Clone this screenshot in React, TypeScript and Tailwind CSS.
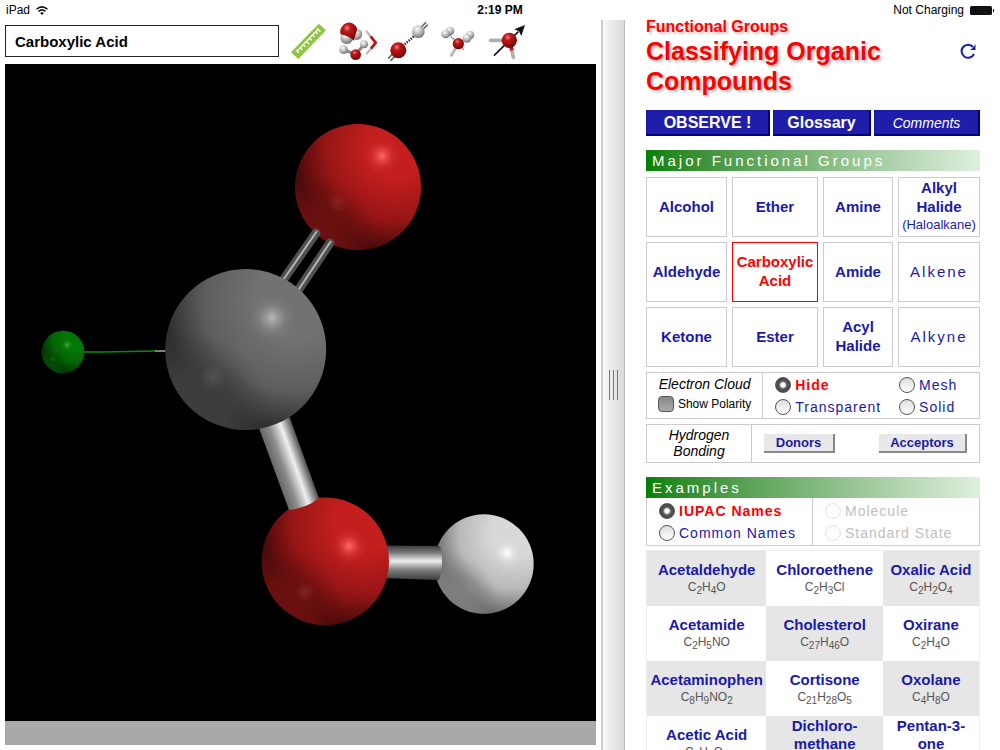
import React, { useState } from 'react';
import { clsx } from 'clsx';

const groups = [
  ['Alcohol'], ['Ether'], ['Amine'], ['Alkyl', 'Halide', '(Haloalkane)'],
  ['Aldehyde'], ['Carboxylic', 'Acid'], ['Amide'], ['Alkene'],
  ['Ketone'], ['Ester'], ['Acyl', 'Halide'], ['Alkyne'],
];

const examples = [
  [['Acetaldehyde', 'C2H4O'], ['Chloroethene', 'C2H3Cl'], ['Oxalic Acid', 'C2H2O4']],
  [['Acetamide', 'C2H5NO'], ['Cholesterol', 'C27H46O'], ['Oxirane', 'C2H4O']],
  [['Acetaminophen', 'C8H9NO2'], ['Cortisone', 'C21H28O5'], ['Oxolane', 'C4H8O']],
  [['Acetic Acid', 'C2H4O2'], ['Dichloro- methane', 'CH2Cl2'], ['Pentan-3- one', 'C5H10O']],
];

const Formula: React.FC<{ value: string }> = ({ value }) => (
  <>
    {value.split(/(\d+)/).map((part, i) =>
      /^\d+$/.test(part) ? <sub key={i} className="text-[10px]">{part}</sub> : part
    )}
  </>
);

interface RadioProps {
  name: string;
  label: string;
  value: string;
  disabled?: boolean;
  onChange: (v: string) => void;
}

const Radio: React.FC<RadioProps> = ({ name, label, value, disabled, onChange }) => {
  const checked = value === label;
  return (
    <label
      className={clsx(
        'flex items-center gap-1 text-[14px] leading-[22px] tracking-[1px] whitespace-nowrap',
        disabled ? 'text-[#c0c0c0]' : checked ? 'text-[#f00] font-bold' : 'text-[#1a1aaa]'
      )}
    >
      <input
        type="radio"
        name={name}
        checked={checked}
        disabled={disabled}
        onChange={() => onChange(label)}
        className="appearance-none size-4 shrink-0 rounded-full border border-[#555] bg-linear-to-b from-[#ddd] to-white checked:bg-[radial-gradient(circle,#fff_2px,#aaa_3px,#555_4px,#444_8px)] disabled:border-[#e4e4e4] disabled:from-[#fafafa]"
      />
      {label}
    </label>
  );
};

const SectionBar: React.FC<{ title: string }> = ({ title }) => (
  <h2 className="h-[21px] pl-1.5 text-[15px] leading-[21px] tracking-[3px] text-white bg-linear-to-r from-[#008000] to-[#dff0df] whitespace-nowrap">
    {title}
  </h2>
);

/* ---- ball and stick drawing ---- */

const palettes = {
  red: { light: '#c41e1e', mid: '#981616', dark: '#4a0a0a', fill: '#6b1010', spot: '#ff6666', dim: '#8e2a2a' },
  gray: { light: '#727272', mid: '#5e5e5e', dark: '#2e2e2e', fill: '#3e3e3e', spot: '#b8b8b8', dim: '#5a5a5a' },
  white: { light: '#d8d8d8', mid: '#b8b8b8', dark: '#6c6c6c', fill: '#7e7e7e', spot: '#ffffff', dim: '#8c8c8c' },
  green: { light: '#047804', mid: '#046404', dark: '#023402', fill: '#034a03', spot: '#44a844', dim: '#206820' },
};

const SphereDefs = () => (
  <defs>
    {Object.entries(palettes).map(([id, p]) => (
      <React.Fragment key={id}>
        <radialGradient id={`${id}-base`} cx="0.8" cy="0.2" r="0.92">
          <stop offset="0" stopColor={p.light} />
          <stop offset="0.25" stopColor={p.light} />
          <stop offset="0.6" stopColor={p.mid} />
          <stop offset="0.87" stopColor={p.dark} />
          <stop offset="1" stopColor={p.dark} />
        </radialGradient>
        <radialGradient id={`${id}-fill`} cx="0.14" cy="0.9" r="0.5">
          <stop offset="0" stopColor={p.fill} />
          <stop offset="0.45" stopColor={p.fill} stopOpacity="0.9" />
          <stop offset="0.75" stopColor={p.fill} stopOpacity="0.35" />
          <stop offset="1" stopColor={p.fill} stopOpacity="0" />
        </radialGradient>
        <radialGradient id={`${id}-spot`}>
          <stop offset="0" stopColor={p.spot} />
          <stop offset="0.3" stopColor={p.spot} stopOpacity="0.5" />
          <stop offset="0.6" stopColor={p.spot} stopOpacity="0.15" />
          <stop offset="1" stopColor={p.spot} stopOpacity="0" />
        </radialGradient>
        <radialGradient id={`${id}-dim`}>
          <stop offset="0" stopColor={p.dim} stopOpacity="0.7" />
          <stop offset="1" stopColor={p.dim} stopOpacity="0" />
        </radialGradient>
      </React.Fragment>
    ))}
    <linearGradient id="stick-co" gradientUnits="userSpaceOnUse" x1="274" y1="470" x2="305" y2="459">
      <stop offset="0" stopColor="#666" />
      <stop offset="0.3" stopColor="#8c8c8c" />
      <stop offset="0.65" stopColor="#f0f0f0" />
      <stop offset="1" stopColor="#4c4c4c" />
    </linearGradient>
    <linearGradient id="stick-oh" x1="0" y1="0" x2="0" y2="1">
      <stop offset="0" stopColor="#3c3c3c" />
      <stop offset="0.2" stopColor="#777" />
      <stop offset="0.45" stopColor="#eee" />
      <stop offset="0.7" stopColor="#808080" />
      <stop offset="1" stopColor="#3c3c3c" />
    </linearGradient>
  </defs>
);

interface BallProps {
  color: keyof typeof palettes;
  x: number;
  y: number;
  r: number;
}

interface SphereProps extends BallProps {
  spot: [number, number];
  dim: [number, number];
}

const Sphere: React.FC<SphereProps> = ({ color, x, y, r, spot, dim }) => (
  <g>
    <circle cx={x} cy={y} r={r} fill={`url(#${color}-base)`} />
    <circle cx={x} cy={y} r={r} fill={`url(#${color}-fill)`} />
    <circle cx={spot[0]} cy={spot[1]} r={r * 0.28} fill={`url(#${color}-spot)`} />
    <circle cx={dim[0]} cy={dim[1]} r={r * 0.16} fill={`url(#${color}-dim)`} />
  </g>
);

const Molecule = () => (
  <svg viewBox="5 64 591 657" className="block size-full" role="img" aria-label="Carboxylic Acid model">
    <SphereDefs />
    <path d="M84 352H102L130 351.500L155 351" stroke="#0a8a0a" strokeWidth="1.500" fill="none" />
    <path d="M155 351H168" stroke="#aaa" strokeWidth="1.500" />
    <Sphere color="green" x={63} y={352} r={21.3} spot={[67, 345]} dim={[53, 359]} />
    <Sphere color="red" x={358} y={187} r={63} spot={[382, 156]} dim={[338, 202]} />
    <path d="M279 286L316 233M295 295L330 243" stroke="#505050" strokeWidth="9" strokeLinecap="round" />
    <path d="M279 286L317 231M295 295L331 241" stroke="#b4b4b4" strokeWidth="2" />
    <Sphere color="white" x={484} y={564} r={49.7} spot={[507, 553]} dim={[471, 588]} />
    <path d="M380 545.500L439 546Q442 546 442 563Q441 580 438 580L380 578Z" fill="url(#stick-oh)" />
    <Sphere color="red" x={325.3} y={561.3} r={63.7} spot={[349, 546]} dim={[305, 592]} />
    <path d="M256 420L289 510Q307 508 319 498L287 410Z" fill="url(#stick-co)" />
    <Sphere color="gray" x={245.7} y={349.5} r={80.5} spot={[272, 318]} dim={[213, 377]} />
  </svg>
);

/* ---- toolbar icons ---- */

const Ball: React.FC<BallProps> = ({ color, x, y, r }) => (
  <circle cx={x} cy={y} r={r} fill={`url(#ball-${color})`} />
);

const BallDefs = () => (
  <svg width="0" height="0" className="absolute" aria-hidden="true">
    <defs>
      <radialGradient id="ball-red" cx="0.4" cy="0.3" r="0.7">
        <stop offset="0" stopColor="#ec8080" />
        <stop offset="0.3" stopColor="#c01818" />
        <stop offset="1" stopColor="#700808" />
      </radialGradient>
      <radialGradient id="ball-white" cx="0.4" cy="0.3" r="0.7">
        <stop offset="0" stopColor="#fff" />
        <stop offset="0.4" stopColor="#ccc" />
        <stop offset="1" stopColor="#777" />
      </radialGradient>
    </defs>
  </svg>
);

const tools = [
  {
    label: 'Measure',
    box: '24 18 120 120',
    art: (
      <>
        <path d="M33 112L116 26L138 46L55 132Z" fill="#8dc63f" />
        <path
          d="M48 105L57 114M51 109L114 43M60 97L67 104M69 88L76 95M78 78L88 88M88 69L95 76M97 59L104 66M106 50L113 57M111 40L121 50"
          stroke="#fff"
          strokeWidth="4"
          fill="none"
        />
      </>
    ),
  },
  {
    label: 'Model style',
    box: '174 18 120 120',
    art: (
      <>
        <Ball color="white" x={230} y={58} r={17} />
        <Ball color="white" x={200} y={68} r={19} />
        <path d="M182 58A26 27 0 1 1 232 42L221 77Q206 62 182 58Z" fill="url(#ball-red)" />
        <path d="M192 105L227 118L252 89" stroke="#888" strokeWidth="9" fill="none" />
        <Ball color="white" x={191} y={104} r={13} />
        <Ball color="white" x={252} y={88} r={12} />
        <Ball color="red" x={227} y={119} r={16} />
        <path d="M258 47L287 83L259 118" stroke="#bbb" strokeWidth="7" fill="none" />
        <path d="M272 64L287 83L273 101" stroke="#c01414" strokeWidth="8" fill="none" />
      </>
    ),
  },
  {
    label: 'Hydrogen bond',
    box: '324 18 120 120',
    art: (
      <>
        <path d="M324 131L340 114M331 138L347 121M424 36L438 22M430 42L443 29" stroke="#666" strokeWidth="5" />
        <path d="M368 93L405 61" stroke="#222" strokeWidth="7" strokeDasharray="4 4" />
        <Ball color="white" x={415} y={50} r={19} />
        <Ball color="red" x={355} y={106} r={24} />
      </>
    ),
  },
  {
    label: 'Geometry',
    box: '474 18 120 120',
    art: (
      <>
        <path d="M536 85L514 121" stroke="#bbb" strokeWidth="9" strokeLinecap="round" />
        <path d="M508 60L528 80M560 68L540 82M541 88L550 104" stroke="#555" strokeWidth="4" strokeDasharray="4 3" />
        <Ball color="white" x={510} y={48} r={13} />
        <Ball color="white" x={497} y={57} r={13} />
        <Ball color="white" x={570} y={60} r={13} />
        <Ball color="white" x={561} y={70} r={13} />
        <Ball color="red" x={535} y={86} r={17} />
      </>
    ),
  },
  {
    label: 'Dipole',
    box: '624 18 120 120',
    art: (
      <>
        <path d="M632 76H680" stroke="#b0b0b0" strokeWidth="11" strokeLinecap="round" />
        <path d="M692 90L700 127" stroke="#b0b0b0" strokeWidth="11" strokeLinecap="round" />
        <path d="M692 90L696 106" stroke="#c01414" strokeWidth="11" />
        <path d="M642 122L715 50" stroke="#111" strokeWidth="5" />
        <path d="M735 30L724 63L717 49L703 43Z" fill="#111" />
        <Ball color="red" x={688} y={76} r={23} />
      </>
    ),
  },
];

const GroupName: React.FC<{ lines: string[] }> = ({ lines }) => (
  <>
    {lines.map(line => (
      <span key={line} className={clsx('block', line.startsWith('(') && 'text-[13px] leading-[18px] font-normal')}>
        {line}
      </span>
    ))}
  </>
);

const App = () => {
  const [group, setGroup] = useState('Carboxylic');
  const [cloud, setCloud] = useState('Hide');
  const [naming, setNaming] = useState('IUPAC Names');
  const [state, setState] = useState('');
  const [polarity, setPolarity] = useState(false);

  return (
    <div className="h-screen flex flex-col overflow-hidden bg-white text-black font-['Liberation_Sans',Arial,sans-serif]">
      {/* Status bar */}
      <header className="h-5 shrink-0 grid grid-cols-3 items-center px-1.5 text-[12px]">
        <div className="flex items-center gap-1.5">
          iPad
          <svg width="12" height="9" viewBox="0 0 24 18" fill="none" stroke="#111" strokeWidth="3">
            <path d="M1 6.500Q12 -3 23 6.500M5 11Q12 4.500 19 11" />
            <path d="M8 14L12 18L16 14Q12 11 8 14Z" fill="#111" stroke="none" />
          </svg>
        </div>
        <div className="text-center font-bold">2:19 PM</div>
        <div className="flex items-center justify-end gap-1.5">
          Not Charging
          <svg width="24" height="9" viewBox="0 0 24 9" fill="#111">
            <rect width="22" height="9" rx="1.500" />
            <path d="M23 3H24V6H23Z" />
          </svg>
        </div>
      </header>

      <div className="flex flex-1 min-h-0">
        {/* Model viewer */}
        <main className="flex-1 min-w-0 flex flex-col px-[5px] pb-[5px]">
          <div className="h-11 shrink-0 flex items-center gap-[9px] pb-0.5">
            <input
              type="text"
              aria-label="Model name"
              defaultValue="Carboxylic Acid"
              className="w-[274px] h-8 px-[9px] border border-[#222] text-[15px] font-bold outline-none"
            />
            <div className="flex gap-2.5">
              <BallDefs />
              {tools.map(tool => (
                <button key={tool.label} type="button" aria-label={tool.label}>
                  <svg width="40" height="40" viewBox={tool.box}>{tool.art}</svg>
                </button>
              ))}
            </div>
          </div>
          <div className="flex-1 min-h-0 bg-black">
            <Molecule />
          </div>
          <div className="h-6 shrink-0 bg-[#a9a9a9]" />
        </main>

        {/* Splitter */}
        <div className="w-6 shrink-0 flex items-center justify-center gap-[3px] border-l-2 border-r border-l-[#ccc] border-r-[#bbb] bg-linear-to-r from-[#f8f8f8] to-[#dadada]">
          <span className="w-px h-[30px] bg-[#777]" />
          <span className="w-px h-[30px] bg-[#777]" />
          <span className="w-px h-[30px] bg-[#777]" />
        </div>

        {/* Side panel */}
        <aside className="w-[37.5%] shrink-0 overflow-hidden pl-[21px] pr-5">
          <div className="flex justify-between items-center text-[#f00] font-bold [text-shadow:2px_2px_3px_#bbb]">
            <div>
              <p className="text-[16px] leading-[14px]">Functional Groups</p>
              <h1 className="text-[25px] leading-[30px] mt-[2px]">Classifying Organic Compounds</h1>
            </div>
            <button type="button" aria-label="Reload" className="mr-1 -mt-3.5 shrink-0">
              <svg width="16" height="16" viewBox="0 0 16 16" fill="none" stroke="#1a1aaa" strokeWidth="2">
                <path d="M13 4A6.500 6.500 0 1 0 14 11" />
                <path d="M15.500 1V7H9.500Q13 6 15.500 1Z" fill="#1a1aaa" stroke="none" />
              </svg>
            </button>
          </div>

          <nav className="mt-3.5 grid grid-cols-[124fr_98fr_106fr] gap-[3px] text-white">
            <button type="button" className="h-[26px] bg-[#1e1eaa] border border-[#1616a0] border-b-2 border-b-[#00007a] border-r-2 border-r-[#00007a] text-[16px] font-bold leading-none">OBSERVE !</button>
            <button type="button" className="h-[26px] bg-[#1e1eaa] border border-[#1616a0] border-b-2 border-b-[#00007a] border-r-2 border-r-[#00007a] text-[16px] font-bold leading-none">Glossary</button>
            <button type="button" className="h-[26px] bg-[#1e1eaa] border border-[#1616a0] border-b-2 border-b-[#00007a] border-r-2 border-r-[#00007a] text-[14px] italic leading-none">Comments</button>
          </nav>

          <section className="mt-3.5">
            <SectionBar title="Major Functional Groups" />
            <div className="mt-1.5 grid grid-cols-[81fr_86fr_70fr_82fr] auto-rows-[60px] gap-[5px]">
              {groups.map(lines => (
                <button
                  key={lines.join(' ')}
                  type="button"
                  onClick={() => setGroup(lines[0])}
                  className={clsx(
                    'min-w-0 pb-0.5 border leading-[19px] whitespace-nowrap',
                    lines[0] === group ? 'border-[#f00] text-[#f00]' : 'border-[#ccc] text-[#1a1aaa]',
                    /^Alk(e|y)ne$/.test(lines[0]) ? 'text-[15px] tracking-[2px]' : 'text-[15px] font-bold'
                  )}
                >
                  <GroupName lines={lines} />
                </button>
              ))}
            </div>
          </section>

          <section className="mt-[5px] flex h-[47px] border border-[#ccc]">
            <div className="w-[35%] pb-1 border-r border-[#ccc] flex flex-col items-center justify-center">
              <p className="text-[14px] leading-5 italic whitespace-nowrap">Electron Cloud</p>
              <label className="flex items-center gap-1 text-[12px] leading-5 whitespace-nowrap">
                <input
                  type="checkbox"
                  checked={polarity}
                  onChange={e => setPolarity(e.target.checked)}
                  className="appearance-none size-4 rounded-[4px] border border-[#555] bg-linear-to-b from-[#888] to-[#aaa] checked:from-[#444]"
                />
                Show Polarity
              </label>
            </div>
            <div className="flex-1 grid grid-cols-[124fr_80fr] content-center pl-3">
              {['Hide', 'Mesh', 'Transparent', 'Solid'].map(o => (
                <Radio key={o} name="cloud" label={o} value={cloud} onChange={setCloud} />
              ))}
            </div>
          </section>

          <section className="mt-[5px] flex h-[39px] border border-[#ccc]">
            <p className="w-[105px] pb-0.5 border-r border-[#ccc] text-[14px] leading-4 italic text-center flex items-center justify-center">
              Hydrogen<br />Bonding
            </p>
            <div className="flex-1 flex items-center justify-between px-3 text-[13px] font-bold text-[#1a1aaa]">
              <button type="button" className="w-[71px] h-[19px] leading-4 bg-[#e8e8e8] border-r-2 border-b-2 border-[#888]">Donors</button>
              <button type="button" className="w-[88px] h-[19px] leading-4 bg-[#e8e8e8] border-r-2 border-b-2 border-[#888]">Acceptors</button>
            </div>
          </section>

          <section className="mt-3.5">
            <SectionBar title="Examples" />
            <div className="flex h-12 border border-t-0 border-[#ccc]">
              <div className="w-1/2 pl-3 pt-0.5 border-r border-[#ccc]">
                {['IUPAC Names', 'Common Names'].map(o => (
                  <Radio key={o} name="naming" label={o} value={naming} onChange={setNaming} />
                ))}
              </div>
              <div className="w-1/2 pl-3 pt-0.5">
                {['Molecule', 'Standard State'].map(o => (
                  <Radio key={o} name="state" label={o} value={state} disabled onChange={setState} />
                ))}
              </div>
            </div>

            <table className="mt-1 w-full table-fixed border-collapse border border-[#eee] text-center">
              <colgroup>
                <col className="w-[36%]" />
                <col className="w-[35%]" />
                <col className="w-[29%]" />
              </colgroup>
              <tbody>
                {examples.map((row, r) => (
                  <tr key={r} className="h-[55px]">
                    {row.map(([name, formula], c) => (
                      <td key={name} className={clsx('p-0 align-middle', (r + c) % 2 === 0 ? 'bg-[#e6e6e6]' : 'bg-white')}>
                        <a href="#" className="block">
                          <span className="block text-[15px] leading-[18px] font-bold text-[#1a1aaa]">{name}</span>
                          <span className="block text-[12px] leading-4 text-[#555]"><Formula value={formula} /></span>
                        </a>
                      </td>
                    ))}
                  </tr>
                ))}
              </tbody>
            </table>
          </section>
        </aside>
      </div>
    </div>
  );
};

export default App;
